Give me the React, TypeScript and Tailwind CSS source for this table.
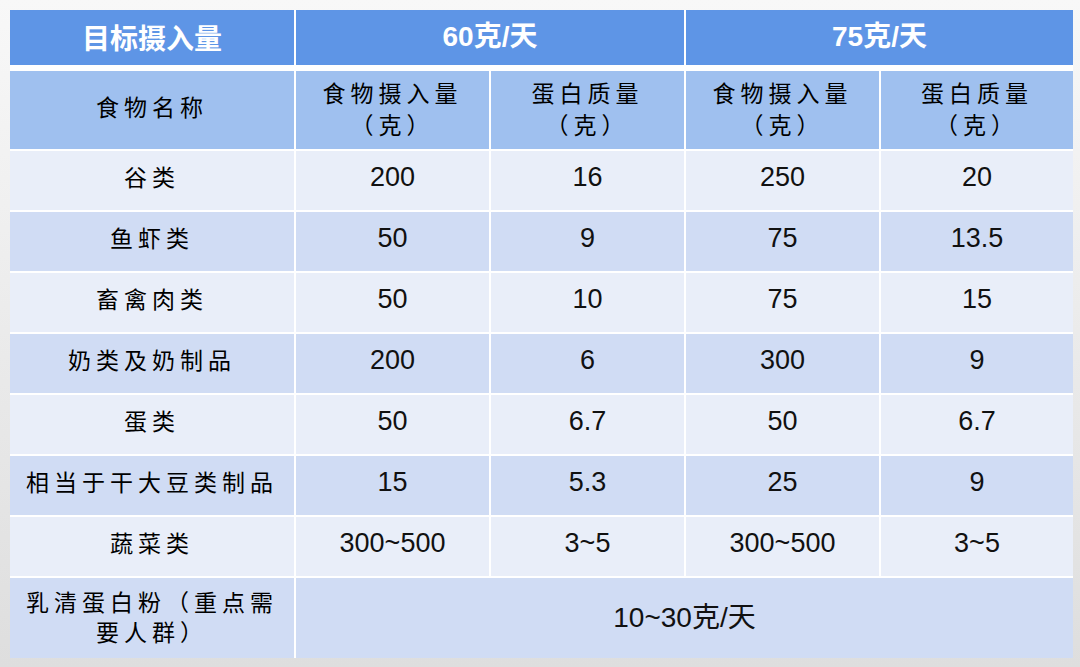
const rows: { name: string; a: string; b: string; c: string; d: string }[] = [
  { name: "谷类", a: "200", b: "16", c: "250", d: "20" },
  { name: "鱼虾类", a: "50", b: "9", c: "75", d: "13.5" },
  { name: "畜禽肉类", a: "50", b: "10", c: "75", d: "15" },
  { name: "奶类及奶制品", a: "200", b: "6", c: "300", d: "9" },
  { name: "蛋类", a: "50", b: "6.7", c: "50", d: "6.7" },
  { name: "相当于干大豆类制品", a: "15", b: "5.3", c: "25", d: "9" },
  { name: "蔬菜类", a: "300~500", b: "3~5", c: "300~500", d: "3~5" },
];

const cols = "grid grid-cols-[284px_193px_193px_193px_192px] gap-[2px]";
const cjk = "font-['Noto_Sans_CJK_SC',sans-serif]";
const num = "font-['Liberation_Sans','Noto_Sans_CJK_SC',sans-serif]";

function NameCell({ children, bg }: { children: React.ReactNode; bg: string }) {
  return (
    <div className={`${bg} flex items-center justify-center pb-[10px] text-[23px] leading-[30px] tracking-[5px] text-black text-center ${cjk}`}>
      {children}
    </div>
  );
}

function NumCell({ children, bg }: { children: React.ReactNode; bg: string }) {
  return (
    <div className={`${bg} flex items-center justify-center pb-[7px] text-[27px] text-[#111] ${num}`}>
      {children}
    </div>
  );
}

export default function App() {
  return (
    <div className="w-[1080px] h-[667px] bg-gradient-to-b from-[#f8f8f8] to-[#dedede] pt-[10px] pl-[10px]">
      <div className="w-[1063px] bg-white">
        {/* top header */}
        <div className={`${cols} h-[55px]`}>
          <div className={`bg-[#5e95e6] flex items-center justify-center pb-[2px] text-white font-bold text-[28px] ${cjk}`}>
            目标摄入量
          </div>
          <div className={`col-span-2 bg-[#5e95e6] flex items-center justify-center pb-[2px] text-white font-bold text-[28px] ${num}`}>
            60克/天
          </div>
          <div className={`col-span-2 bg-[#5e95e6] flex items-center justify-center pb-[2px] text-white font-bold text-[28px] ${num}`}>
            75克/天
          </div>
        </div>

        {/* sub header */}
        <div className={`${cols} h-[78px] mt-[6px]`}>
          <div className={`bg-[#9fc0ef] flex items-center justify-center pb-[7px] text-[23px] tracking-[5px] ${cjk}`}>食物名称</div>
          {["食物摄入量", "蛋白质量", "食物摄入量", "蛋白质量"].map((t, i) => (
            <div key={i} className={`bg-[#9fc0ef] flex flex-col items-center justify-center pb-[5px] text-[23px] leading-[32px] tracking-[5px] ${cjk}`}>
              <span>{t}</span>
              <span>（克）</span>
            </div>
          ))}
        </div>

        {/* body */}
        <div className={`${cols} mt-[2px] auto-rows-[59px]`}>
          {rows.map((r, i) => {
            const bg = i % 2 === 0 ? "bg-[#e9eef9]" : "bg-[#d0dcf4]";
            return (
              <div key={r.name} className="contents">
                <NameCell bg={bg}>{r.name}</NameCell>
                <NumCell bg={bg}>{r.a}</NumCell>
                <NumCell bg={bg}>{r.b}</NumCell>
                <NumCell bg={bg}>{r.c}</NumCell>
                <NumCell bg={bg}>{r.d}</NumCell>
              </div>
            );
          })}
        </div>

        <div className={`${cols} h-[80px] mt-[2px]`}>
          <div className={`bg-[#d0dcf4] flex items-center justify-center px-[12px] pb-[5px] text-[23px] leading-[30px] tracking-[5px] text-center ${cjk}`}>
            乳清蛋白粉（重点需要人群）
          </div>
          <div className={`col-span-4 bg-[#d0dcf4] flex items-center justify-center text-[28px] text-[#111] ${num}`}>
            10~30克/天
          </div>
        </div>
      </div>
    </div>
  );
}
